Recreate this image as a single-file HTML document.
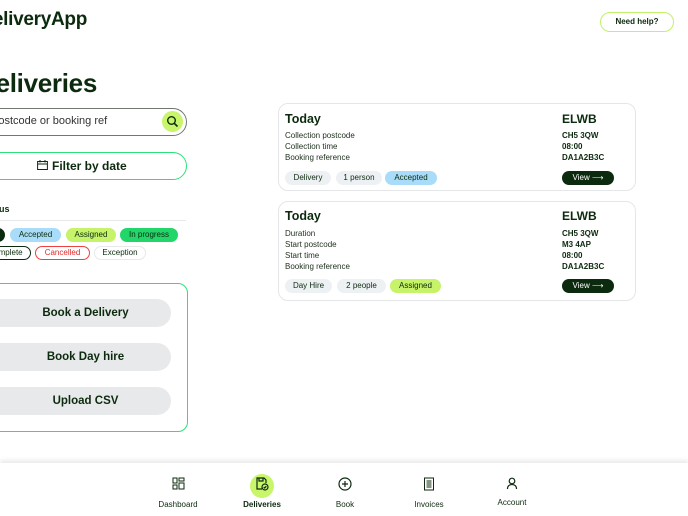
<!DOCTYPE html><html><head><style>
*{box-sizing:border-box;margin:0;padding:0}
body{width:688px;height:516px;overflow:hidden;background:#fff;font-family:"Liberation Sans",sans-serif;color:#0c2a0e;position:relative}
.a{position:absolute}
.b{font-weight:bold}
.chip{position:absolute;height:14px;border-radius:7px;font-size:8px;line-height:14px;text-align:center}
.card{position:absolute;left:278px;width:358px;border:1.5px solid #e4e6e8;border-radius:10px}
.lbl{position:absolute;left:6px;font-size:8px;color:#1c2f1c}
.val{position:absolute;left:283px;font-size:8px;font-weight:bold}
.gc{background:#eef1f4}
.view{position:absolute;left:283px;width:52px;height:14px;border-radius:7px;background:#0c2a0e;color:#fff;font-size:8px;line-height:14px;text-align:center}
.btn{position:absolute;left:-30px;width:201px;height:28px;border-radius:14px;background:#e8e9eb;font-size:11.5px;font-weight:bold;text-align:center;line-height:28px;padding-left:30px}
.nav{position:absolute;top:477px;width:80px;text-align:center;font-size:8px}
.nav svg{display:block;margin:0 auto}
</style></head><body>
<div class="a b" style="left:-100px;width:187px;text-align:right;top:9px;font-size:19px;letter-spacing:-0.3px">DeliveryApp</div>
<div class="a b" style="left:600px;top:12px;width:74px;height:20px;border:1.5px solid #c2f06a;border-radius:10px;font-size:8px;text-align:center;line-height:17px">Need help?</div>
<div class="a b" style="left:-130px;width:227px;text-align:right;top:68px;font-size:26px;letter-spacing:-0.3px">Deliveries</div>
<div class="a" style="left:-30px;top:108px;width:217px;height:28px;border:1.5px solid #707870;border-radius:14px"></div>
<div class="a" style="left:-9px;top:115px;font-size:11px;color:#333">Postcode or booking ref</div>
<div class="a" style="left:162px;top:111px;width:21px;height:21px;border-radius:50%;background:#c8f56a"></div>
<svg class="a" style="left:166px;top:115px" width="13" height="13" viewBox="0 0 13 13"><circle cx="5.5" cy="5.5" r="3.8" fill="none" stroke="#0c2a0e" stroke-width="1.4"/><path d="M8.3 8.3L11.5 11.5" stroke="#0c2a0e" stroke-width="1.6"/></svg>
<div class="a" style="left:-30px;top:152px;width:217px;height:28px;border:1.5px solid #2ee07a;border-radius:14px"></div>
<svg class="a" style="left:37px;top:160px" width="11" height="10" viewBox="0 0 11 10"><rect x="0.6" y="1.5" width="9.8" height="8" fill="none" stroke="#0c2a0e" stroke-width="1"/><path d="M0.6 4h9.8M3 0v2.5M8 0v2.5" stroke="#0c2a0e" stroke-width="1"/></svg>
<div class="a b" style="left:52px;top:159px;font-size:12px">Filter by date</div>
<div class="a b" style="left:-18px;top:204px;font-size:9px">Status</div>
<div class="a" style="left:0;top:220px;width:186px;height:1px;background:#e6e8ea"></div>
<div class="chip" style="left:-20px;top:228px;width:25px;background:#0c2a0e"></div>
<div class="chip" style="left:10px;top:228px;width:51px;background:#a9dcf8">Accepted</div>
<div class="chip" style="left:66px;top:228px;width:50px;background:#c6f36a">Assigned</div>
<div class="chip" style="left:120px;top:228px;width:58px;background:#22d66a">In progress</div>
<div class="chip" style="left:-20px;top:246px;width:51px;border:1px solid #0c2a0e;line-height:12px">Complete</div>
<div class="chip" style="left:35px;top:246px;width:55px;border:1px solid #f04040;color:#e02828;line-height:12px">Cancelled</div>
<div class="chip" style="left:94px;top:246px;width:52px;border:1px solid #e6e8ea;line-height:12px">Exception</div>
<div class="a" style="left:-20px;top:283px;width:208px;height:149px;border:1.5px solid #2ee07a;border-radius:10px"></div>
<div class="btn" style="top:299px">Book a Delivery</div>
<div class="btn" style="top:343px">Book Day hire</div>
<div class="btn" style="top:387px">Upload CSV</div>

<div class="card" style="top:103px;height:88px">
<div class="a b" style="left:6px;top:8px;font-size:12.5px">Today</div>
<div class="a b" style="left:283px;top:8px;font-size:12px">ELWB</div>
<div class="lbl" style="top:27px">Collection postcode</div><div class="val" style="top:27px">CH5 3QW</div>
<div class="lbl" style="top:38px">Collection time</div><div class="val" style="top:38px">08:00</div>
<div class="lbl" style="top:49px">Booking reference</div><div class="val" style="top:49px">DA1A2B3C</div>
<div class="chip gc" style="left:6px;top:67px;width:46px">Delivery</div>
<div class="chip gc" style="left:57px;top:67px;width:46px">1 person</div>
<div class="chip" style="left:106px;top:67px;width:52px;background:#a9dcf8">Accepted</div>
<div class="view" style="top:67px">View ⟶</div>
</div>
<div class="card" style="top:201px;height:100px">
<div class="a b" style="left:6px;top:7px;font-size:12.5px">Today</div>
<div class="a b" style="left:283px;top:7px;font-size:12px">ELWB</div>
<div class="lbl" style="top:27px">Duration</div><div class="val" style="top:27px">CH5 3QW</div>
<div class="lbl" style="top:38px">Start postcode</div><div class="val" style="top:38px">M3 4AP</div>
<div class="lbl" style="top:49px">Start time</div><div class="val" style="top:49px">08:00</div>
<div class="lbl" style="top:60px">Booking reference</div><div class="val" style="top:60px">DA1A2B3C</div>
<div class="chip gc" style="left:6px;top:77px;width:47px">Day Hire</div>
<div class="chip gc" style="left:58px;top:77px;width:49px">2 people</div>
<div class="chip" style="left:111px;top:77px;width:51px;background:#c6f36a">Assigned</div>
<div class="view" style="top:77px">View ⟶</div>
</div>

<div class="a" style="left:0;top:463px;width:688px;height:53px;background:#fff;box-shadow:0 -3px 4px rgba(0,0,0,0.08)"></div>
<div class="nav" style="left:138px"><svg width="13" height="13" viewBox="0 0 13 13" fill="none" stroke="#0c2a0e"><rect x="1" y="1" width="4" height="5"/><rect x="1" y="8" width="4" height="4"/><rect x="7" y="1" width="5" height="3"/><rect x="7" y="6" width="5" height="6"/></svg><div style="margin-top:10px">Dashboard</div></div>
<div class="a" style="left:250px;top:474px;width:24px;height:24px;border-radius:50%;background:#c8f56a"></div>
<div class="nav" style="left:222px"><svg width="14" height="14" viewBox="0 0 14 14" fill="none" stroke="#0c2a0e" stroke-width="1.2"><path d="M7 12H2V1h7l2 2v3"/><path d="M4 1v3h4V1"/><circle cx="10" cy="10" r="3"/><path d="M8.7 10l1 1 1.6-1.8"/></svg><div class="b" style="margin-top:9px">Deliveries</div></div>
<div class="nav" style="left:305px"><svg width="14" height="14" viewBox="0 0 14 14" fill="none" stroke="#0c2a0e" stroke-width="1.2"><circle cx="7" cy="7" r="6"/><path d="M7 4v6M4 7h6"/></svg><div style="margin-top:9px">Book</div></div>
<div class="nav" style="left:389px"><svg width="12" height="14" viewBox="0 0 12 14" fill="none" stroke="#0c2a0e"><rect x="1.5" y="1" width="9" height="12"/><path d="M3.5 4h5M3.5 6h5M3.5 8h5M3.5 10h5"/></svg><div style="margin-top:9px">Invoices</div></div>
<div class="nav" style="left:472px"><svg width="12" height="13" viewBox="0 0 12 13" fill="none" stroke="#0c2a0e" stroke-width="1.2"><circle cx="6" cy="4" r="2.8"/><path d="M1.5 12c0-3 2-4.5 4.5-4.5s4.5 1.5 4.5 4.5"/></svg><div style="margin-top:8px">Account</div></div>
</body></html>
